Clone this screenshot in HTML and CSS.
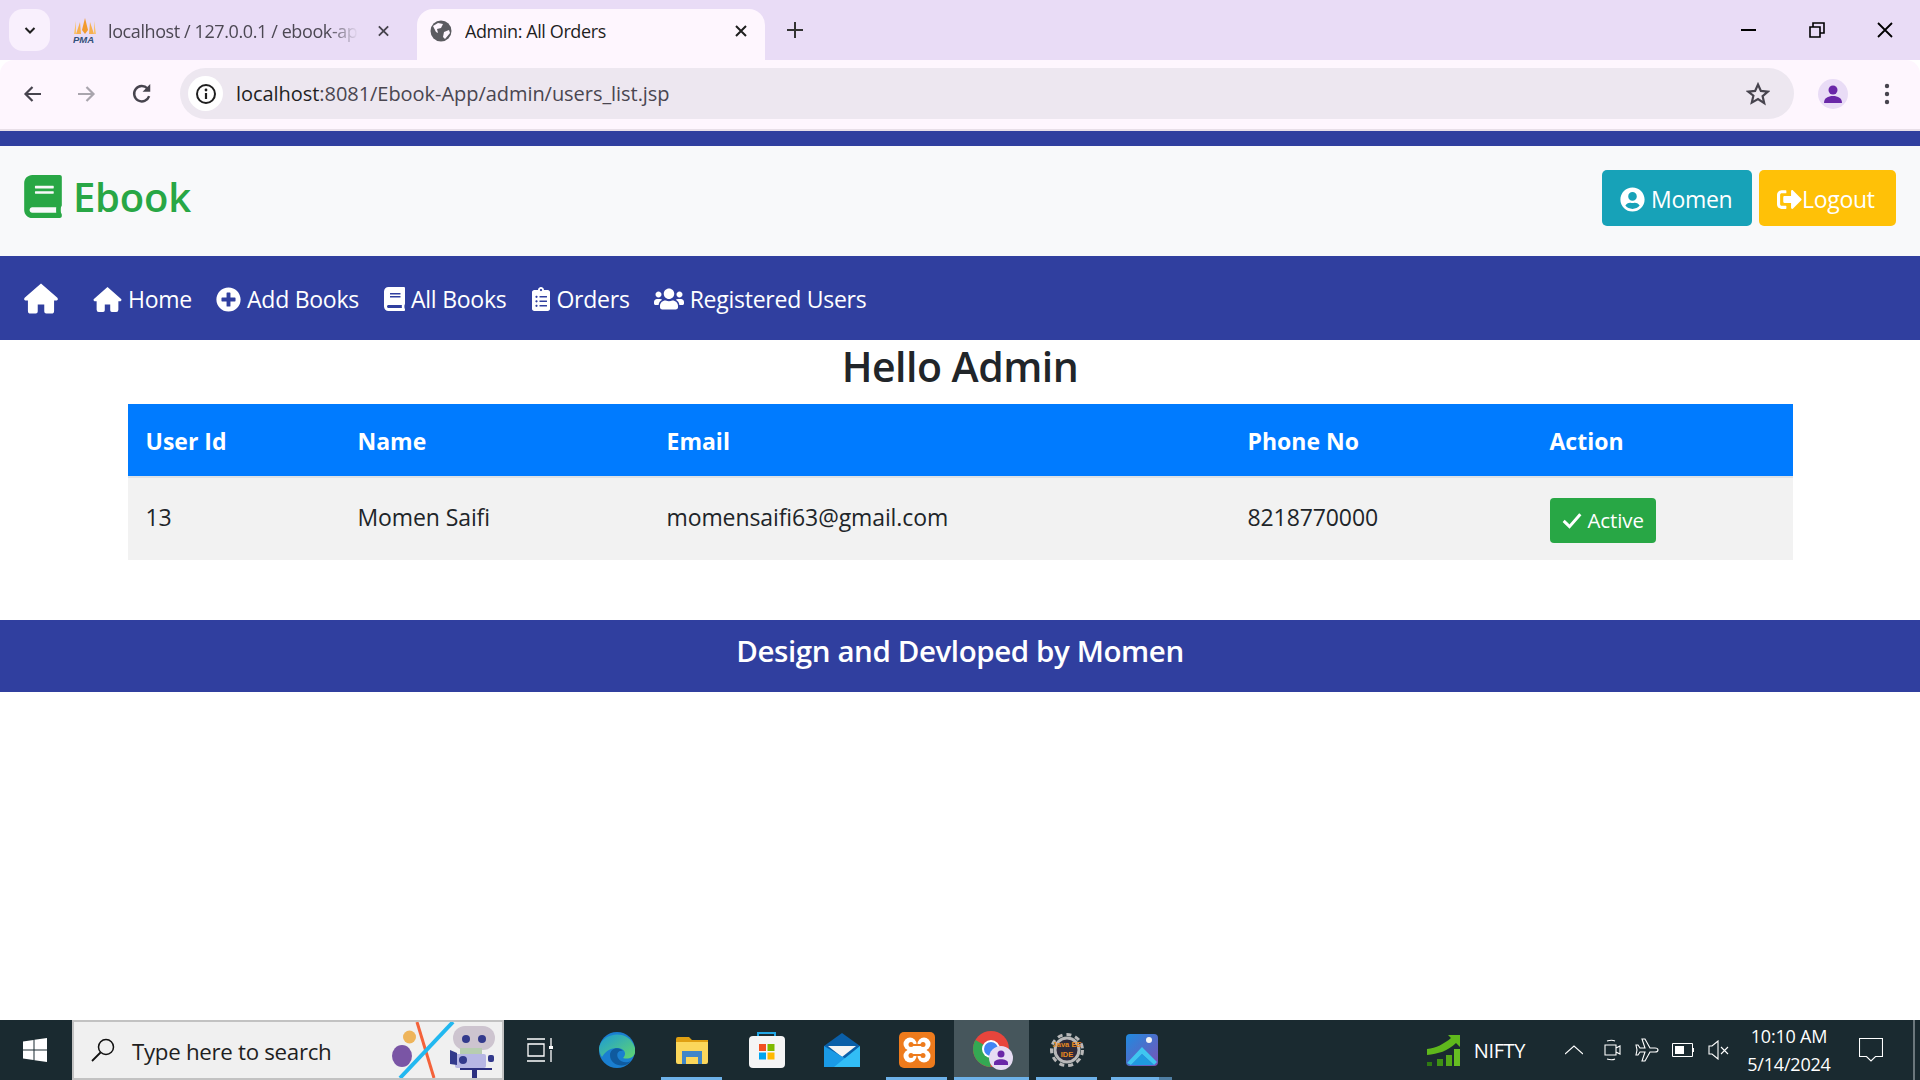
FILE: index.html
```html
<!DOCTYPE html>
<html lang="en">

<head>
    <meta charset="UTF-8">
    <title>Admin: All Orders</title>
    <link rel="stylesheet" href="styles.css">
</head>

<body>
    <svg class="defs" width="0" height="0">
        <symbol id="fa-home" viewBox="0 0 104 92"><path d="M52 0L102 44Q106 50 100 52H92V84Q92 92 84 92H68Q62 92 62 86V64H42V86Q42 92 36 92H20Q12 92 12 84V52H4Q-2 50 2 44Z"/></symbol>
        <symbol id="fa-book" viewBox="0 0 448 512"><path d="M448 360V24c0-13.3-10.7-24-24-24H96C43 0 0 43 0 96v320c0 53 43 96 96 96h328c13.3 0 24-10.7 24-24v-16c0-7.5-3.5-14.3-8.9-18.7-4.2-15.4-4.2-59.3 0-74.7 5.4-4.3 8.9-11.1 8.9-18.6zM128 134c0-3.3 2.7-6 6-6h212c3.3 0 6 2.7 6 6v20c0 3.3-2.7 6-6 6H134c-3.3 0-6-2.7-6-6v-20zm0 64c0-3.3 2.7-6 6-6h212c3.3 0 6 2.7 6 6v20c0 3.3-2.7 6-6 6H134c-3.3 0-6-2.7-6-6v-20zm253.4 250H96c-17.7 0-32-14.3-32-32 0-17.6 14.4-32 32-32h285.4c-1.9 17.1-1.9 46.9 0 64z"/></symbol>
        <symbol id="fa-plus" viewBox="0 0 512 512"><path d="M256 8C119 8 8 119 8 256s111 248 248 248 248-111 248-248S393 8 256 8zm144 276c0 6.6-5.4 12-12 12h-92v92c0 6.6-5.4 12-12 12h-56c-6.6 0-12-5.4-12-12v-92h-92c-6.6 0-12-5.4-12-12v-56c0-6.6 5.4-12 12-12h92v-92c0-6.6 5.4-12 12-12h56c6.6 0 12 5.4 12 12v92h92c6.6 0 12 5.4 12 12v56z"/></symbol>
        <symbol id="fa-list" viewBox="0 0 384 512"><path d="M336 64h-80c0-35.3-28.7-64-64-64s-64 28.7-64 64H48C21.5 64 0 85.5 0 112v352c0 26.5 21.5 48 48 48h288c26.5 0 48-21.5 48-48V112c0-26.5-21.5-48-48-48zM96 424c-13.3 0-24-10.7-24-24s10.7-24 24-24 24 10.7 24 24-10.7 24-24 24zm0-96c-13.3 0-24-10.7-24-24s10.7-24 24-24 24 10.7 24 24-10.7 24-24 24zm0-96c-13.3 0-24-10.7-24-24s10.7-24 24-24 24 10.7 24 24-10.7 24-24 24zm96-192c13.3 0 24 10.7 24 24s-10.7 24-24 24-24-10.7-24-24 10.7-24 24-24zm128 368c0 4.4-3.6 8-8 8H168c-4.4 0-8-3.6-8-8v-16c0-4.4 3.6-8 8-8h144c4.4 0 8 3.6 8 8v16zm0-96c0 4.4-3.6 8-8 8H168c-4.4 0-8-3.6-8-8v-16c0-4.4 3.6-8 8-8h144c4.4 0 8 3.6 8 8v16zm0-96c0 4.4-3.6 8-8 8H168c-4.4 0-8-3.6-8-8v-16c0-4.4 3.6-8 8-8h144c4.4 0 8 3.6 8 8v16z"/></symbol>
        <symbol id="fa-users" viewBox="0 0 640 512"><path d="M96 224c35.3 0 64-28.7 64-64s-28.7-64-64-64-64 28.7-64 64 28.7 64 64 64zm448 0c35.3 0 64-28.7 64-64s-28.7-64-64-64-64 28.7-64 64 28.7 64 64 64zm32 32h-64c-17.6 0-33.5 7.1-45.1 18.6 40.3 22.1 68.9 62 75.1 109.4h66c17.7 0 32-14.3 32-32v-32c0-35.3-28.7-64-64-64zm-256 0c61.9 0 112-50.1 112-112S381.9 32 320 32 208 82.1 208 144s50.1 112 112 112zm76.8 32h-8.3c-20.8 10-43.9 16-68.5 16s-47.6-6-68.5-16h-8.3C179.6 288 128 339.6 128 403.2V432c0 26.5 21.5 48 48 48h288c26.5 0 48-21.5 48-48v-28.8c0-63.6-51.6-115.2-115.2-115.2zm-223.7-13.4C161.5 263.1 145.6 256 128 256H64c-35.3 0-64 28.7-64 64v32c0 17.7 14.3 32 32 32h65.9c6.3-47.4 34.9-87.3 75.2-109.4z"/></symbol>
        <symbol id="fa-user" viewBox="0 0 496 512"><path d="M248 8C111 8 0 119 0 256s111 248 248 248 248-111 248-248S385 8 248 8zm0 96c48.6 0 88 39.4 88 88s-39.4 88-88 88-88-39.4-88-88 39.4-88 88-88zm0 344c-58.7 0-111.3-26.6-146.5-68.2 18.8-35.4 55.6-59.8 98.5-59.8 2.4 0 4.8.4 7.1 1.1 13 4.2 26.6 6.9 40.9 6.9 14.3 0 28-2.7 40.9-6.9 2.3-.7 4.7-1.1 7.1-1.1 42.9 0 79.7 24.4 98.5 59.8C359.3 421.4 306.7 448 248 448z"/></symbol>
        <symbol id="fa-out" viewBox="0 0 512 512"><path d="M497 273L329 441c-15 15-41 4.5-41-17v-96H152c-13.3 0-24-10.7-24-24v-96c0-13.3 10.7-24 24-24h136V88c0-21.4 25.9-32 41-17l168 168c9.3 9.4 9.3 24.6 0 34zM192 436v-40c0-6.6-5.4-12-12-12H96c-17.7 0-32-14.3-32-32V160c0-17.7 14.3-32 32-32h84c6.6 0 12-5.4 12-12V76c0-6.6-5.4-12-12-12H96c-53 0-96 43-96 96v192c0 53 43 96 96 96h84c6.6 0 12-5.4 12-12z"/></symbol>
        <symbol id="fa-check" viewBox="0 0 24 24"><path d="M2 13l7 7L22 5" fill="none" stroke="currentColor" stroke-width="3.600"/></symbol>
    </svg>

    <!-- browser chrome -->
    <div class="tabbar">
        <button class="tab-search">
            <svg width="14" height="14" viewBox="0 0 14 14"><path d="M2.5 5l4.500 4.500L11.500 5" fill="none" stroke="#1f1f1f" stroke-width="2"/></svg>
        </button>
        <div class="tab tab-pma">
            <svg class="favicon" width="24" height="26" viewBox="0 0 24 26">
                <path d="M12 0l3 12-3 4-3-4z" fill="#f29a2e"/>
                <path d="M7 4l1 12H3zM17 4l-1 12h5z" fill="#f6b04f"/>
                <path d="M3 3L1 16h2zM21 3l2 13h-2z" fill="#f9c26e"/>
                <text x="0" y="25" class="pma">PMA</text>
            </svg>
            <span class="tab-title faded">localhost / 127.0.0.1 / ebook-ap</span>
            <svg width="14" height="14" viewBox="0 0 14 14"><path d="M2 2l10 10M12 2L2 12" stroke="#47444e" stroke-width="2"/></svg>
        </div>
        <div class="tab active">
            <svg class="favicon" width="22" height="22" viewBox="0 0 22 22">
                <circle cx="11" cy="11" r="10.500" fill="#5b5b60"/>
                <path d="M3 6l5-3 5 1-2 4-4 1 1 4-2-1zM14 12l5-2 1 3-5 6-2-2z" fill="#fef6fe"/>
            </svg>
            <span class="tab-title">Admin: All Orders</span>
            <svg width="14" height="14" viewBox="0 0 14 14"><path d="M2 2l10 10M12 2L2 12" stroke="#1f1f1f" stroke-width="2"/></svg>
        </div>
        <svg class="new-tab" width="18" height="18" viewBox="0 0 18 18"><path d="M9 1v16M1 9h16" stroke="#333" stroke-width="2"/></svg>
        <div class="window-btns">
            <svg width="16" height="16" viewBox="0 0 16 16"><path d="M0 8h15" stroke="#000" stroke-width="2"/></svg>
            <svg width="16" height="16" viewBox="0 0 16 16"><path d="M1 5h10v10H1zM4 5V1h11v10h-4" fill="none" stroke="#000" stroke-width="1.600"/></svg>
            <svg width="16" height="16" viewBox="0 0 16 16"><path d="M1 1l14 14M15 1L1 15" stroke="#000" stroke-width="1.800"/></svg>
        </div>
    </div>

    <div class="toolbar">
        <svg width="20" height="20" viewBox="0 0 20 20"><path d="M18 10H3M9.500 3L2.500 10l7 7" fill="none" stroke="#47444e" stroke-width="2.200"/></svg>
        <svg width="20" height="20" viewBox="0 0 20 20"><path d="M2 10h15M10.500 3l7 7-7 7" fill="none" stroke="#a9a5ad" stroke-width="2.200"/></svg>
        <svg class="reload" width="22" height="22" viewBox="0 0 20 20"><path d="M16.500 12a7 7 0 1 1-1.500-7" fill="none" stroke="#47444e" stroke-width="2.200"/><path d="M17.500 1v7h-7z" fill="#47444e"/></svg>
        <div class="omnibox">
            <span class="site-info">
                <svg width="22" height="22" viewBox="0 0 22 22"><circle cx="11" cy="11" r="9" fill="none" stroke="#1f1f1f" stroke-width="2"/><path d="M11 10v6" stroke="#1f1f1f" stroke-width="2.200"/><circle cx="11" cy="7" r="1.400" fill="#1f1f1f"/></svg>
            </span>
            <span class="url">localhost<span class="url-rest">:8081/Ebook-App/admin/users_list.jsp</span></span>
            <svg class="star" width="24" height="24" viewBox="0 0 24 24"><path d="M12 2.500l2.900 6.400 7 .7-5.300 4.600 1.600 6.900L12 17l-6.200 3.600 1.600-6.900L2.100 9.600l7-.7z" fill="none" stroke="#47444e" stroke-width="2.200"/></svg>
        </div>
        <span class="avatar">
            <svg width="20" height="20" viewBox="0 0 20 20"><circle cx="10" cy="6" r="4.500" fill="#6a27a8"/><path d="M1 19c0-5 4-7 9-7s9 2 9 7z" fill="#6a27a8"/></svg>
        </span>
        <svg class="kebab" width="6" height="22" viewBox="0 0 6 22"><circle cx="3" cy="3" r="2.200" fill="#47444e"/><circle cx="3" cy="11" r="2.200" fill="#47444e"/><circle cx="3" cy="19" r="2.200" fill="#47444e"/></svg>
    </div>

    <!-- page -->
    <div class="page">
        <div class="top-strip"></div>

        <header class="brand-row">
            <h1 class="brand">
                <svg class="fa brand-icon"><use href="#fa-book"/></svg>
                Ebook
            </h1>
            <div class="account">
                <a class="btn btn-info"><svg class="fa"><use href="#fa-user"/></svg> Momen</a>
                <a class="btn btn-warning"><svg class="fa"><use href="#fa-out"/></svg>Logout</a>
            </div>
        </header>

        <nav class="main-nav">
            <svg class="fa nav-home"><use href="#fa-home"/></svg>
            <a><svg class="fa ic-home"><use href="#fa-home"/></svg>Home</a>
            <a><svg class="fa ic-plus"><use href="#fa-plus"/></svg>Add Books</a>
            <a><svg class="fa ic-book"><use href="#fa-book"/></svg>All Books</a>
            <a><svg class="fa ic-list"><use href="#fa-list"/></svg>Orders</a>
            <a><svg class="fa ic-users"><use href="#fa-users"/></svg>Registered Users</a>
        </nav>

        <h2 class="hello">Hello Admin</h2>

        <table class="users">
            <thead>
                <tr>
                    <th class="col-id">User Id</th>
                    <th class="col-name">Name</th>
                    <th class="col-email">Email</th>
                    <th class="col-phone">Phone No</th>
                    <th>Action</th>
                </tr>
            </thead>
            <tbody>
                <tr>
                    <td>13</td>
                    <td>Momen Saifi</td>
                    <td>momensaifi63@gmail.com</td>
                    <td>8218770000</td>
                    <td><a class="btn-active"><svg class="fa"><use href="#fa-check"/></svg> Active</a></td>
                </tr>
            </tbody>
        </table>

        <footer class="site-footer">Design and Devloped by Momen</footer>
    </div>

    <!-- windows taskbar -->
    <div class="taskbar">
        <svg class="start" width="24" height="24" viewBox="0 0 24 24"><path d="M0 3.500l10.500-1.500v9.500H0zM11.500 1.800L24 0v11.500H11.500zM0 12.500h10.500V22L0 20.500zM11.500 12.500H24V24l-12.500-1.800z" fill="#fff"/></svg>
        <div class="search">
            <svg width="26" height="26" viewBox="0 0 26 26"><circle cx="16" cy="10" r="7.500" fill="none" stroke="#111" stroke-width="1.500"/><path d="M10.500 15.500L2 24" stroke="#111" stroke-width="1.800"/></svg>
            <span>Type here to search</span>
            <svg class="search-art" width="114" height="56" viewBox="0 0 114 56">
                <path d="M29 0l17 56" stroke="#f4623a" stroke-width="3"/>
                <path d="M65 0L12 56" stroke="#22b8f0" stroke-width="4"/>
                <circle cx="21.500" cy="15" r="6.500" fill="#eeb45a"/>
                <ellipse cx="14" cy="34" rx="10" ry="11" fill="#7a55a5"/>
                <rect x="65" y="4" width="42" height="24" rx="12" fill="#cdc4cf"/>
                <rect x="72" y="26" width="22" height="8" fill="#b7cdb0"/>
                <circle cx="78" cy="17" r="4" fill="#333a8c"/>
                <circle cx="94" cy="17" r="4" fill="#333a8c"/>
                <rect x="67" y="32" width="31" height="14" rx="2" fill="#b7b7e4"/>
                <path d="M62 28l7 3v12l-7-1z" fill="#333a8c"/>
                <circle cx="75" cy="38" r="4" fill="#333a8c"/>
                <rect x="100" y="33" width="6" height="7" rx="2" fill="#333a8c"/>
                <path d="M72 46h32v2H72zM84 47h5v9h-5z" fill="#2c3080"/>
            </svg>
        </div>
        <svg class="task-view" width="26" height="24" viewBox="0 0 26 24"><path d="M0 1h18M0 23h18M1 6h16v12H1zM24 0v8M24 12v12" fill="none" stroke="#fff" stroke-width="1.300"/><rect x="22" y="8" width="4" height="3" fill="#fff"/></svg>

        <div class="apps">
            <span class="app">
                <svg width="36" height="36" viewBox="0 0 36 36">
                    <defs>
                        <linearGradient id="edgeTop" x1="0" y1="0" x2="1" y2="1"><stop offset="0" stop-color="#1c9ad6"/><stop offset="1" stop-color="#62d66e"/></linearGradient>
                    </defs>
                    <circle cx="18" cy="18" r="18" fill="#1a7fd0"/>
                    <path d="M0 16C3 0 30-4 36 16c2 9-6 12-12 10 4-4 2-10-6-10-8 0-13 5-15 9-2-3-3-6-3-9z" fill="url(#edgeTop)"/>
                    <path d="M11 23c0-7 9-9 13-4-5-1-7 3-5 7 3 5 9 5 13 3-6 8-21 5-21-6z" fill="#0f5a9e"/>
                </svg>
            </span>
            <span class="app open">
                <svg width="32" height="27" viewBox="0 0 32 27">
                    <path d="M0 2q0-2 2-2h11l3 3h16v22H0z" fill="#e0a012"/>
                    <path d="M0 5h32v20q0 2-2 2H2q-2 0-2-2z" fill="#fbd75b"/>
                    <path d="M10 27v-7h12v7h4V14H6v13z" fill="#3f86c8"/>
                </svg>
            </span>
            <span class="app">
                <svg width="36" height="36" viewBox="0 0 36 36">
                    <path d="M9 5V1h17v4" fill="none" stroke="#21a7e6" stroke-width="2"/>
                    <rect y="4" width="36" height="32" rx="4" fill="#f5f5f5"/>
                    <path d="M10 12h7v7h-7z" fill="#f25022"/><path d="M18.500 12h7v7h-7z" fill="#7fba00"/>
                    <path d="M10 20.500h7v7h-7z" fill="#00a4ef"/><path d="M18.500 20.500h7v7h-7z" fill="#ffb900"/>
                </svg>
            </span>
            <span class="app">
                <svg width="36" height="34" viewBox="0 0 36 34">
                    <path d="M18 0l18 13v21H0V13z" fill="#0a5fa8"/>
                    <path d="M4 13h28L18 24z" fill="#f4f4f4"/>
                    <path d="M0 13v21h36z" fill="#1a9ae6"/>
                    <path d="M36 13v21H10z" fill="#32bdf5"/>
                </svg>
            </span>
            <span class="app open">
                <svg width="36" height="36" viewBox="0 0 36 36">
                    <rect width="36" height="36" rx="5" fill="#ee7b1c"/>
                    <g fill="#fff">
                        <circle cx="11" cy="12" r="6.500"/><circle cx="25" cy="12" r="6.500"/>
                        <circle cx="11" cy="24" r="6.500"/><circle cx="25" cy="24" r="6.500"/>
                        <rect x="11" y="12" width="14" height="12"/>
                    </g>
                    <g fill="#ee7b1c">
                        <circle cx="12" cy="12.500" r="2.500"/><circle cx="24" cy="12.500" r="2.500"/>
                        <circle cx="12" cy="23.500" r="2.500"/><circle cx="24" cy="23.500" r="2.500"/>
                        <path d="M12 12h12v2H12zM12 22h12v2H12z"/>
                    </g>
                </svg>
            </span>
            <span class="app current">
                <svg width="42" height="42" viewBox="0 0 42 42">
                    <circle cx="20" cy="20" r="18" fill="#e8453c"/>
                    <path d="M20 20H38a18 18 0 0 1-16 18z" fill="#f9bb2d"/>
                    <path d="M20 20L4.500 11a18 18 0 0 0 15 27z" fill="#34a853"/>
                    <circle cx="20" cy="20" r="9" fill="#fff"/><circle cx="20" cy="20" r="7" fill="#4285f4"/>
                    <circle cx="30" cy="29" r="12" fill="#e6dcf3"/>
                    <circle cx="30" cy="25" r="3.500" fill="#6a27a8"/><path d="M23 36v-2c0-5 14-5 14 0v2z" fill="#6a27a8"/>
                </svg>
            </span>
            <span class="app open">
                <svg width="34" height="34" viewBox="0 0 34 34">
                    <circle cx="17" cy="17" r="15.500" fill="none" stroke="#b8b8b8" stroke-width="3" stroke-dasharray="5 4"/>
                    <circle cx="17" cy="17" r="12" fill="#2d2a3a" stroke="#b8b8b8" stroke-width="3"/>
                    <text x="17" y="14" class="jfx">Java EE</text>
                    <text x="17" y="24" class="jfx">IDE</text>
                </svg>
            </span>
            <span class="app open wide">
                <svg width="32" height="32" viewBox="0 0 32 32">
                    <defs>
                        <linearGradient id="photoBg" x1="0" y1="0" x2="1" y2="1"><stop offset="0" stop-color="#1f8be0"/><stop offset="1" stop-color="#7a52b5"/></linearGradient>
                    </defs>
                    <rect width="32" height="32" rx="4" fill="url(#photoBg)"/>
                    <path d="M1 29L16 13l15 15-3 3-12-11-11 11z" fill="#3fc6f0"/>
                    <path d="M5 31l11-11 12 11z" fill="#1f9ae0"/>
                    <circle cx="23" cy="6" r="3" fill="#f4f4f4"/>
                </svg>
            </span>
        </div>

        <div class="tray">
            <svg class="nifty" width="34" height="34" viewBox="0 0 34 34">
                <path d="M1 16C10 15 18 11 25 5l-3-3h12v12l-4-4C22 18 12 21 1 22z" fill="#5fb81c"/>
                <rect x="1" y="29" width="5" height="4" fill="#2f7a12"/>
                <rect x="11" y="26" width="6" height="7" fill="#3f9214"/>
                <rect x="20" y="22" width="6" height="11" fill="#54a818"/>
                <rect x="28" y="16" width="6" height="17" fill="#66bd22"/>
            </svg>
            <span class="nifty-label">NIFTY</span>
            <svg class="t-chev" width="18" height="10" viewBox="0 0 18 10"><path d="M0 9l9-8 9 8" fill="none" stroke="#fff" stroke-width="1.100"/></svg>
            <svg class="t-meet" width="17" height="22" viewBox="0 0 17 22"><path d="M1 6h11v10H1zM12 9l4-2v8l-4-2M3 2c3-1 6-1 8 0M3 20c3 1 6 1 8 0" fill="none" stroke="#fff" stroke-width="1.100"/></svg>
            <svg class="t-plane" width="24" height="24" viewBox="0 0 24 24"><path d="M23 12c0-1-1-2-3-2h-5L10 1H7l3 9H5L3 7H1l1 5-1 5h2l2-3h5l-3 9h3l5-9h5c2 0 3-1 3-2z" fill="none" stroke="#fff" stroke-width="1.100"/></svg>
            <svg class="t-batt" width="22" height="14" viewBox="0 0 22 14"><path d="M.5 .5h20v13H.5z" fill="none" stroke="#fff"/><path d="M3 3h9v8H3z" fill="#fff"/><path d="M21 5h1v4h-1z" fill="#fff"/></svg>
            <svg class="t-vol" width="21" height="20" viewBox="0 0 21 20"><path d="M1 6h3l6-5v18l-6-5H1zM13 7l7 7M20 7l-7 7" fill="none" stroke="#fff" stroke-width="1.100"/></svg>
            <div class="clock">
                <span>10:10 AM</span>
                <span>5/14/2024</span>
            </div>
            <svg class="t-note" width="24" height="24" viewBox="0 0 24 24"><path d="M.5 .5h23v18h-7l-4.500 4.500-4.500-4.500h-7z" fill="none" stroke="#fff" stroke-width="1.100"/></svg>
            <span class="show-desktop"></span>
        </div>
    </div>
</body>

</html>
```

FILE: styles.css
```css
* {
    box-sizing: border-box;
}

html,
body {
    margin: 0;
    padding: 0;
}

body {
    width: 1920px;
    height: 1080px;
    overflow: hidden;
    display: flex;
    flex-direction: column;
    background: white;
    font-family: "Open Sans", "Noto Sans", sans-serif;
    color: #212529;
}

.defs {
    display: none;
}

a {
    color: inherit;
    text-decoration: none;
}

.fa {
    fill: currentColor;
    flex: none;
}

/* browser chrome */

.tabbar {
    height: 60px;
    flex: none;
    display: flex;
    align-items: flex-end;
    background: #e9dcf6;
    padding-left: 9px;
}

.tab-search {
    width: 41px;
    height: 42px;
    margin-bottom: 9px;
    border: none;
    border-radius: 14px;
    background: #f9f0fd;
    display: flex;
    align-items: center;
    justify-content: center;
    padding: 0;
}

.tab {
    height: 51px;
    display: flex;
    align-items: center;
    padding: 0 17px 7px 13px;
    font-size: 18px;
}

.tab-pma {
    width: 330px;
    margin-left: 20px;
    padding-left: 3px;
    padding-right: 10px;
}

.tab.active {
    width: 348px;
    margin-left: 17px;
    background: #fef6fe;
    border-radius: 16px 16px 0 0;
}

.favicon {
    flex: none;
    margin-right: 11px;
}

.tab.active .favicon {
    margin-right: 13px;
}

.pma {
    font: italic bold 9.500px "Liberation Sans", sans-serif;
    fill: #33507a;
}

.tab-title {
    flex: 1;
    white-space: nowrap;
    overflow: hidden;
    letter-spacing: -0.4px;
    color: #1f1f1f;
}

.tab-title.faded {
    flex: none;
    width: 250px;
    margin-right: 19px;
    color: #4c4853;
    -webkit-mask-image: linear-gradient(to right, black 88%, transparent);
    mask-image: linear-gradient(to right, black 88%, transparent);
}

.new-tab {
    margin: 0 0 21px 21px;
}

.window-btns {
    margin-left: auto;
    height: 60px;
    display: flex;
    align-items: center;
    gap: 52px;
    padding-right: 27px;
}

.toolbar {
    height: 71px;
    flex: none;
    display: flex;
    align-items: center;
    background: #fef6fe;
    border-bottom: 2px solid #e8dfe8;
    padding: 0 0 2px 23px;
    gap: 33px;
    border-radius: 14px 14px 0 0;
}

.reload {
    margin-left: 2px;
}

.omnibox {
    width: 1614px;
    height: 51px;
    flex: none;
    margin-left: -6px;
    margin-right: -17px;
    border-radius: 26px;
    background: #ede7f0;
    display: flex;
    align-items: center;
    padding: 0 24px 0 8px;
}

.site-info {
    width: 35px;
    height: 35px;
    border-radius: 50%;
    background: white;
    display: flex;
    align-items: center;
    justify-content: center;
    margin-right: 13px;
}

.url {
    flex: 1;
    font-size: 20px;
    letter-spacing: -0.05px;
    color: #1f1f1f;
}

.url-rest {
    color: #4a4650;
}

.avatar {
    width: 30px;
    height: 30px;
    margin-left: 8px;
    border-radius: 50%;
    background: #e9dcf6;
    display: flex;
    align-items: center;
    justify-content: center;
}

.kebab {
    margin-left: 3px;
}

/* page */

.page {
    flex: 1;
    display: flex;
    flex-direction: column;
    min-height: 0;
}

.top-strip {
    height: 15px;
    background: #303f9f;
}

.brand-row {
    height: 110px;
    display: flex;
    align-items: center;
    justify-content: space-between;
    padding: 0 24px;
    background: #f8f9fa;
}

.brand {
    margin: 0 0 9px;
    display: flex;
    align-items: center;
    gap: 11px;
    font-size: 40px;
    font-weight: 600;
    letter-spacing: -0.2px;
    color: #28a745;
}

.brand-icon {
    width: 38px;
    height: 43px;
}

.account {
    display: flex;
    gap: 7px;
    margin-bottom: 6px;
}

.btn {
    height: 56px;
    display: flex;
    align-items: center;
    gap: 6px;
    padding: 2px 18px 0;
    border-radius: 5px;
    font-size: 23px;
    letter-spacing: -0.3px;
    color: white;
}

.btn .fa {
    width: 25px;
    height: 25px;
}

.btn-info {
    width: 150px;
    background: #17a2b8;
}

.btn-warning {
    width: 137px;
    gap: 0;
    background: #ffc107;
}

.main-nav {
    height: 84px;
    display: flex;
    align-items: center;
    padding: 2px 0 0 24px;
    background: #303f9f;
    color: white;
    font-size: 23px;
    letter-spacing: -0.25px;
}

.nav-home {
    width: 34px;
    height: 31px;
    margin: 0 35px 2px 0;
}

.main-nav a {
    display: flex;
    align-items: center;
    gap: 6px;
    margin-right: 24px;
}

.ic-home {
    width: 29px;
    height: 25px;
}

.ic-plus {
    width: 25px;
    height: 25px;
}

.ic-book {
    width: 21px;
    height: 24px;
    margin-left: 1px;
}

.ic-list {
    width: 18px;
    height: 24px;
    margin-left: 2px;
}

.ic-users {
    width: 30px;
    height: 24px;
}

.hello {
    height: 64px;
    margin: 0;
    text-align: center;
    font-size: 41px;
    line-height: 52px;
    font-weight: 600;
    letter-spacing: -0.5px;
}

.users {
    width: 1665px;
    margin: 0 auto;
    border-collapse: collapse;
    table-layout: fixed;
    font-size: 23px;
    letter-spacing: -0.1px;
}

.users th {
    height: 73px;
    padding: 1px 18px 0;
    background: #007bff;
    color: white;
    text-align: left;
    font-weight: 700;
    letter-spacing: 0;
    border-bottom: 2px solid #dee2e6;
}

.users td {
    height: 83px;
    padding: 0 18px 5px;
    background: #f2f2f2;
}

.col-id {
    width: 212px;
}

.col-name {
    width: 309px;
}

.col-email {
    width: 581px;
}

.col-phone {
    width: 302px;
}

.btn-active {
    display: inline-flex;
    align-items: center;
    gap: 6px;
    height: 45px;
    width: 106px;
    margin-top: 7px;
    padding-left: 12px;
    border-radius: 4px;
    background: #28a745;
    color: white;
    font-size: 20.500px;
}

.btn-active .fa {
    width: 20px;
    height: 20px;
}

.site-footer {
    height: 72px;
    margin-top: 60px;
    background: #303f9f;
    color: white;
    text-align: center;
    font-size: 29.500px;
    line-height: 62px;
    font-weight: 600;
    letter-spacing: -0.4px;
}

/* windows taskbar */

.taskbar {
    height: 60px;
    flex: none;
    display: flex;
    align-items: center;
    background: #1a2a30;
    padding-left: 23px;
    color: white;
}

.start {
    flex: none;
}

.search {
    width: 432px;
    height: 60px;
    margin-left: 25px;
    flex: none;
    display: flex;
    align-items: flex-start;
    padding: 14px 0 0 16px;
    background: #f0f0f0;
    border: 2px solid #c2c2c2;
    color: #1f1f1f;
    font-size: 22.300px;
    letter-spacing: -0.3px;
}

.search > svg:first-child {
    margin: 1px 16px 0 0;
}

.search-art {
    margin-left: auto;
    margin-top: -14px;
}

.task-view {
    flex: none;
    margin-left: 23px;
}

.apps {
    display: flex;
    margin-left: 26px;
    height: 60px;
}

.app {
    width: 75px;
    height: 60px;
    display: flex;
    align-items: center;
    justify-content: center;
    position: relative;
}

.app.open::after,
.app.current::after {
    content: "";
    position: absolute;
    left: 7px;
    right: 7px;
    bottom: 0;
    height: 3px;
    background: #6db1e8;
}

.app.current {
    background: #46565c;
}

.app.current::after {
    left: 0;
    right: 0;
}

.app.wide::before {
    content: "";
    position: absolute;
    left: 55px;
    right: 7px;
    bottom: 0;
    height: 3px;
    background: #4f7ea3;
    z-index: 1;
}

.jfx {
    font: bold 7.500px "Liberation Sans", sans-serif;
    fill: #e98a1f;
    text-anchor: middle;
}

.tray {
    flex: 1;
    height: 60px;
    display: flex;
    align-items: center;
    justify-content: flex-end;
    padding-right: 5px;
}

.nifty-label {
    margin-left: 14px;
    font-size: 20px;
    letter-spacing: -0.4px;
}

.t-chev {
    margin-left: 40px;
}

.t-meet {
    margin-left: 21px;
}

.t-plane {
    margin-left: 14px;
}

.t-batt {
    margin-left: 13px;
}

.t-vol {
    margin-left: 14px;
}

.clock {
    width: 118px;
    margin-left: 1px;
    display: flex;
    flex-direction: column;
    align-items: center;
    gap: 4px;
    font-size: 18px;
    line-height: 24px;
    letter-spacing: -0.2px;
}

.t-note {
    margin-left: 11px;
}

.show-desktop {
    width: 2px;
    height: 60px;
    margin-left: 30px;
    background: #6b777c;
}
```
